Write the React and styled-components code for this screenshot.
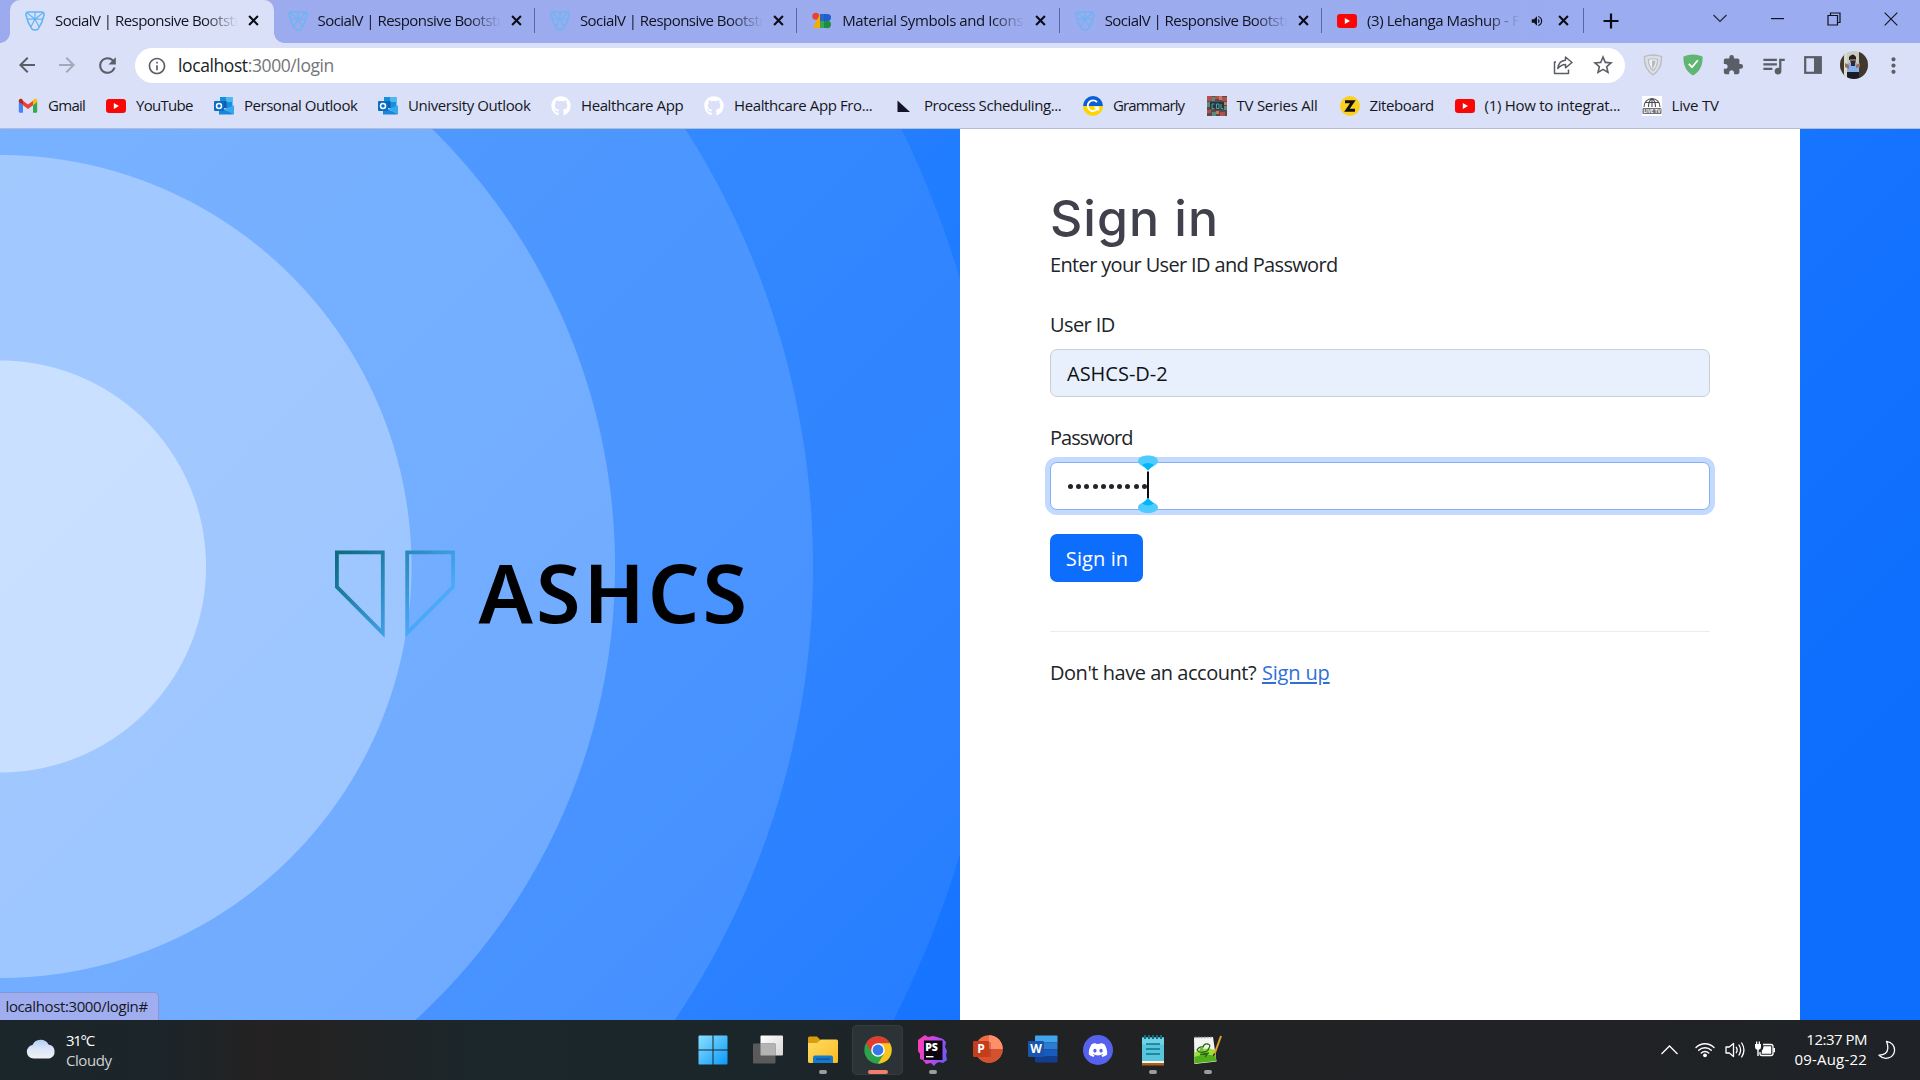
import React from 'react';
import styled, { createGlobalStyle } from 'styled-components';
import {
  MdArrowBack, MdArrowForward, MdRefresh, MdInfoOutline, MdStarOutline,
  MdExtension, MdQueueMusic, MdMoreVert, MdVolumeUp,
} from 'react-icons/md';
import { FaGithub, FaDiscord } from 'react-icons/fa';

const GlobalStyle = createGlobalStyle`
  * { box-sizing: border-box; }
  body { margin: 0; overflow: hidden; font-family: "Open Sans", "Noto Sans", sans-serif; }
  svg { display: block; flex: none; }
`;

const Screen = styled.div`
  width: 1920px;
  height: 1080px;
  display: flex;
  flex-direction: column;
  overflow: hidden;
`;

const Label = styled.span`
  white-space: nowrap;
  letter-spacing: ${(p) => p.$ls || 0}px;
`;

/* ---------- tab strip ---------- */
const TabStrip = styled.div`
  height: 43px;
  flex: none;
  display: flex;
  background: linear-gradient(to right, #9cabed, #9bacf0);
  padding-left: 10px;
  font-size: 15px;
  color: #10131f;
`;

const Tab = styled.div`
  position: relative;
  width: ${(p) => (p.$active ? 264 : 262.4)}px;
  margin-right: ${(p) => (p.$active ? -1.5 : 0)}px;
  height: 43px;
  flex: none;
  display: flex;
  align-items: center;
  padding: 0 0 2px 15px;
  gap: 10px;
  background: ${(p) => (p.$active ? '#dae0f8' : 'transparent')};
  border-radius: 10px 10px 0 0;

  &::before,
  &::after {
    content: '';
    display: ${(p) => (p.$active ? 'block' : 'none')};
    position: absolute;
    bottom: 0;
    width: 10px;
    height: 10px;
  }
  &::before {
    left: -10px;
    background: radial-gradient(circle at 0 0, transparent 9.5px, #dae0f8 10px);
  }
  &::after {
    right: -10px;
    background: radial-gradient(circle at 100% 0, transparent 9.5px, #dae0f8 10px);
  }
`;

const TabTitle = styled.div`
  width: ${(p) => p.$w}px;
  overflow: hidden;
  line-height: 22px;
  padding-bottom: 1px;
  mask-image: linear-gradient(to right, #000 calc(100% - 34px), transparent);
`;

const TabIcons = styled.div`
  display: flex;
  align-items: center;
  gap: 14px;
`;

const TabDivider = styled.div`
  width: 1px;
  height: 25px;
  margin-left: auto;
  background: #5a67a4;
`;

const NewTab = styled.div`
  width: 54px;
  padding-bottom: 1px;
  display: flex;
  align-items: center;
  justify-content: center;
`;

const WindowButtons = styled.div`
  margin-left: auto;
  height: 37px;
  display: flex;
  align-items: center;
`;

const WindowButton = styled.div`
  width: 57.2px;
  display: flex;
  justify-content: center;
`;

/* ---------- toolbar ---------- */
const Toolbar = styled.div`
  height: 45px;
  flex: none;
  display: flex;
  align-items: center;
  background: #dae0f8;
  padding: 0 0 0 7px;
  color: #5a5e66;
`;

const ToolButton = styled.div`
  width: 40px;
  height: 40px;
  padding-bottom: 1px;
  flex: none;
  display: flex;
  align-items: center;
  justify-content: center;
  color: ${(p) => (p.$dim ? '#a3a8ba' : 'inherit')};
`;

const AddressBar = styled.div`
  width: 1490px;
  height: 35px;
  margin: 0 8px;
  flex: none;
  display: flex;
  align-items: center;
  border-radius: 18px;
  background: #fff;
  padding: 0 2px 0 12px;
  font-size: 17.5px;
`;

const Url = styled.div`
  flex: 1;
  margin-left: 11px;
  padding-bottom: 2px;
  line-height: 26px;
  white-space: nowrap;
  letter-spacing: -0.4px;
  color: #73767b;
  b { font-weight: 400; color: #202124; }
`;

const Avatar = styled.div`
  width: 28px;
  height: 28px;
  margin-left: 2px;
  border-radius: 50%;
  overflow: hidden;
`;

/* ---------- bookmarks ---------- */
const Bookmarks = styled.div`
  height: 41px;
  flex: none;
  display: flex;
  align-items: center;
  background: #dae0f8;
  border-bottom: 1px solid #b4bccf;
  padding: 0 0 5px 18px;
  font-size: 15px;
  color: #15171c;
`;

const Bookmark = styled.div`
  width: ${(p) => p.$w}px;
  flex: none;
  display: flex;
  align-items: center;
  gap: 10px;
  line-height: 22px;
  span { padding-bottom: 2px; }
`;

/* ---------- page ---------- */
const Page = styled.main`
  position: relative;
  height: 891px;
  flex: none;
  display: flex;
  background: linear-gradient(135deg, #2a85ff 0%, #1f7bff 45%, #1472ff 70%, #0d6efd 90%);
`;

const Brand = styled.section`
  width: 960px;
  display: flex;
  align-items: flex-start;
  gap: 23.5px;
  padding: 420.5px 0 0 335px;
  background: radial-gradient(
    circle at 0 437.5px,
    rgba(255, 255, 255, 0.75) 205.5px, rgba(255, 255, 255, 0.565) 206.5px,
    rgba(255, 255, 255, 0.565) 411px, rgba(255, 255, 255, 0.365) 412px,
    rgba(255, 255, 255, 0.365) 614.5px, rgba(255, 255, 255, 0.185) 615.5px,
    rgba(255, 255, 255, 0.185) 812.5px, rgba(255, 255, 255, 0.07) 813.5px,
    rgba(255, 255, 255, 0.07) 1001.5px, rgba(255, 255, 255, 0) 1002.5px
  );
`;

const BrandName = styled.div`
  margin-top: -1px;
  font-family: "Noto Sans", "Open Sans", sans-serif;
  font-weight: 600;
  font-size: 81px;
  line-height: 86px;
  letter-spacing: 3px;
  color: #000;
`;

const Panel = styled.section`
  width: 840px;
  padding: 59px 90px 0;
  background: #fff;
  font-size: 20px;
  line-height: 30px;
  color: #212529;
`;

const Title = styled.h1`
  margin: 0 0 2px;
  font-family: Inter, sans-serif;
  font-weight: 500;
  font-size: 50px;
  line-height: 60px;
  letter-spacing: 1px;
  color: #41414d;
`;

const Field = styled.div`
  margin-top: ${(p) => p.$mt}px;
  display: flex;
  flex-direction: column;
  gap: 9px;
`;

const Input = styled.div`
  height: 48px;
  display: flex;
  align-items: center;
  padding: ${(p) => (p.$focus ? '0 15px' : '2px 16px 0')};
  border: 1px solid ${(p) => (p.$focus ? '#86b0f5' : '#c9cfda')};
  border-radius: 7px;
  background: ${(p) => (p.$focus ? '#fff' : '#e8f0fe')};
  box-shadow: ${(p) => (p.$focus ? '0 0 0 5px #c3d9fd' : 'none')};
  color: #101214;
`;

const Dots = styled.div`
  display: flex;
  gap: 3.2px;
  padding: 1px 0 0 2px;
`;

const Dot = styled.i`
  width: 5px;
  height: 5px;
  border-radius: 50%;
  background: #212529;
`;

const CaretSlot = styled.div`
  position: relative;
  width: 0;
  height: 46px;
  svg { position: absolute; left: -8.5px; top: -9px; }
`;

const SubmitButton = styled.button`
  display: block;
  width: 93px;
  height: 48px;
  margin: 24px 0 0;
  padding: 2px 0 0 1px;
  border: 0;
  border-radius: 7px;
  background: #0d6efd;
  font: 20px/30px "Open Sans", sans-serif;
  letter-spacing: 0.1px;
  color: #fff;
`;

const Rule = styled.div`
  height: 1px;
  margin: 49px 0 26px;
  background: #ebecee;
`;

const SignUpLink = styled.a`
  margin-left: 1px;
  color: #2f6fd6;
  letter-spacing: -0.15px;
  text-decoration: underline;
  text-decoration-thickness: 2px;
  text-underline-offset: 2px;
`;

const StatusBubble = styled.div`
  position: absolute;
  left: 0;
  bottom: 0;
  width: 159px;
  height: 28px;
  padding: 1px 0 0 5.5px;
  border: solid #8595d8;
  border-width: 1px 1px 0 0;
  border-radius: 0 5px 0 0;
  background: #a0aeef;
  font-size: 15px;
  line-height: 24px;
  color: #16181f;
`;

/* ---------- taskbar ---------- */
const Taskbar = styled.footer`
  height: 60px;
  flex: none;
  display: flex;
  background: linear-gradient(to right, #1b262b 0, #1c2529 160px, #242223 260px, #232324 330px, #1b272b 480px, #1b262b 760px, #212223 1000px, #202225 1500px, #1f2226 1920px);
  font-size: 15px;
  color: #fff;
`;

const Weather = styled.div`
  width: 685px;
  display: flex;
  align-items: flex-start;
  gap: 9px;
  padding: 18.5px 0 0 26px;
`;

const WeatherText = styled.div`
  display: flex;
  flex-direction: column;
  margin-top: -8.5px;
  line-height: 20px;
  span + span { color: #cfd2d4; }
`;

const Apps = styled.div`
  display: flex;
  padding-top: 5px;
`;

const AppCell = styled.div`
  width: 51px;
  height: 50px;
  margin: 0 2.05px;
  display: flex;
  flex-direction: column;
  align-items: center;
  justify-content: space-between;
  padding: 10px 0 1px;
  border-radius: 5px;
  background: ${(p) => (p.$active ? '#2c3336' : 'transparent')};
  box-shadow: ${(p) => (p.$active ? 'inset 0 0 0 1px #353c3f' : 'none')};
`;

const Indicator = styled.div`
  width: ${(p) => (p.$active ? 20 : 8)}px;
  height: 4px;
  border-radius: 2px;
  background: ${(p) => (p.$active ? '#f0806a' : p.$open ? '#999da0' : 'transparent')};
`;

const Tray = styled.div`
  margin-left: auto;
  display: flex;
  align-items: flex-start;
  padding: 20px 24px 0 0;
  gap: 10px;
  > :first-child { margin-right: 7px; }
`;

const Clock = styled.div`
  width: 84px;
  margin: -11px 1px 0 -2px;
  display: flex;
  flex-direction: column;
  align-items: flex-end;
  line-height: 20px;
`;

/* ---------- drawings ---------- */
const SocialV = ({ color = '#5fb5f3' }) => (
  <svg width="20" height="20" viewBox="0 0 20 20" fill="none" stroke={color} strokeWidth="1.5" strokeLinejoin="round">
    <path d="M3.200 1h13.600c1.800 0 2.600 1.300 2.200 3-.9 4.500-3.200 10-5.700 13.700-1.400 1.800-5.200 1.800-6.600 0C4.200 14 1.900 8.500 1 4 .6 2.300 1.400 1 3.200 1z" />
    <path d="M2 1.800l8 6.400 8-6.400M10 1v7.200M2.800 8.200h14.400M10 8.200 5.800 16M10 8.200 14.200 16" strokeWidth="1.200" />
  </svg>
);

const YouTube = () => (
  <svg width="20" height="20" viewBox="0 0 20 20">
    <rect y="3" width="20" height="14" rx="3.2" fill="#f90606" />
    <path d="M7.800 7v6l5.200-3z" fill="#fff" />
  </svg>
);

const MaterialLogo = () => (
  <svg width="20" height="20" viewBox="0 0 20 20">
    <circle cx="3.800" cy="5.300" r="3.500" fill="#ea4335" />
    <path d="M8 3v14H1z" fill="#f9ab00" />
    <path d="M8 3h5v14H8z" fill="#2b67c8" />
    <path d="M12.500 3a3.500 3.500 0 0 1 0 7z" fill="#1a4ea8" />
    <circle cx="15.500" cy="6.500" r="3.500" fill="#1d5fd0" />
    <circle cx="15.300" cy="13.500" r="3.700" fill="#1e8e3e" />
    <path d="M8 10h4v7H8z" fill="#34a853" />
  </svg>
);

const CloseX = () => (
  <svg width="11" height="11" viewBox="0 0 12 12" stroke="#0b0d14" strokeWidth="2.300">
    <path d="M1.200 1.200l9.600 9.600M10.800 1.200 1.200 10.800" />
  </svg>
);

const Gmail = () => (
  <svg width="20" height="20" viewBox="0 0 20 20">
    <path d="M.8 5.500V15.500q0 1.200 1.200 1.200H5V9z" fill="#4285f4" />
    <path d="M19.200 5.500V15.500q0 1.200-1.200 1.200H15V9z" fill="#34a853" />
    <path d="M5 9.200V4.800l5 3.700 5-3.700V9.200l-5 3.800z" fill="#ea4335" />
    <path d="M.8 6V5c0-1.900 1.900-2.700 3.300-1.700L5 4.300V9z" fill="#c5221f" />
    <path d="M19.200 6V5c0-1.900-1.900-2.700-3.300-1.700L15 4.300V9z" fill="#fbbc04" />
  </svg>
);

const Outlook = () => (
  <svg width="20" height="20" viewBox="0 0 20 20">
    <path d="M6 1h12.500v11H6z" fill="#1490df" />
    <path d="M12 1h6.500v5H12z" fill="#50b8f0" />
    <path d="M6 5h6.500v7H6z" fill="#0f5fab" />
    <path d="M5 9.500l8 5.500 7-5.500V17q0 1.500-1.500 1.500H5z" fill="#1a86d8" />
    <path d="M20 9.500V17q0 1-.8 1.300L10 13z" fill="#38a8ee" />
    <rect y="5" width="10" height="10" rx="1" fill="#0a6cc4" />
    <circle cx="5" cy="10" r="2.500" fill="none" stroke="#fff" strokeWidth="1.500" />
  </svg>
);

const Corner = () => (
  <svg width="20" height="20" viewBox="0 0 20 20"><path d="M3.500 4.500 16 16H3.500z" fill="#13132a" /></svg>
);

const Grammarly = () => (
  <svg width="20" height="20" viewBox="0 0 20 20">
    <path d="M0 10a10 10 0 0 1 20 0z" fill="#0a5fd6" />
    <path d="M0 10a10 10 0 0 0 20 0z" fill="#ffd500" />
    <path d="M14 6.200A5.300 5.300 0 1 0 15 11.500H11.500M15.300 11.200V14.800" fill="none" stroke="#fff" strokeWidth="1.900" />
  </svg>
);

const Series = () => (
  <svg width="20" height="20" viewBox="0 0 20 20">
    <rect width="20" height="20" fill="#5b4a4d" />
    <path d="M0 0h5v5H0zM8 0h4v3H8zM15 1h5v4h-5zM0 14h4v3H0zM13 16h5v4h-5z" fill="#b2504a" />
    <path d="M5 1h3v4H5zM0 6h3v5H0zM16 10h4v4h-4zM5 16h4v4H5z" fill="#5b8b7c" />
    <path d="M12 0h3v4h-3zM3 11h3v3H3zM9 15h3v3H9zM17 6h3v3h-3z" fill="#c97a5b" />
    <rect x="3" y="6" width="14" height="7.500" fill="#243640" />
    <path d="M5 8h2.500M5 8v4.500h2.500M9.500 8h2.500v4.500H9.500zM14 8v4.500h2" fill="none" stroke="#4fa39c" strokeWidth="1" />
  </svg>
);

const Zite = () => (
  <svg width="20" height="20" viewBox="0 0 20 20">
    <circle cx="10" cy="10" r="10" fill="#fbd021" />
    <path d="M5 5.800h7.800L7 14.200h8" fill="none" stroke="#111" strokeWidth="3" />
  </svg>
);

const LiveTv = () => (
  <svg width="20" height="20" viewBox="0 0 20 20">
    <rect width="20" height="20" fill="#fff" />
    <path d="M2 11a8 8.500 0 0 1 16 0M10 2.500V11M6.500 11c0-4 1-7 3.500-8.500 2.500 1.500 3.500 4.500 3.500 8.500M3.500 6.500h13" fill="none" stroke="#4a4d55" strokeWidth="1.100" />
    <rect x=".5" y="12" width="19" height="6" rx="1" fill="#6f727a" />
    <text x="10" y="16.800" textAnchor="middle" fontFamily="Open Sans, sans-serif" fontWeight="700" fontSize="4.800" fill="#fff">LIVE TV</text>
  </svg>
);

const ShareIcon = () => (
  <svg width="20" height="20" viewBox="0 0 20 20" fill="none" stroke="#5a5e66" strokeWidth="1.500" strokeLinejoin="round">
    <path d="M3 7H1.500v11.500h14V14.500" />
    <path d="M4.800 13.500C5.300 8.500 8 5.500 12.500 5.200V2L19 7.500l-6.500 5.300V9.500C9 9.700 7 10.800 4.800 13.500z" />
  </svg>
);

const GreyShield = () => (
  <svg width="20" height="22" viewBox="0 0 20 22">
    <path d="M1.500 2.500Q10-.5 18.500 2.500C19 11 16 17 10 21 4 17 1 11 1.500 2.500z" fill="#dcdee4" stroke="#b8bbc3" strokeWidth="1.300" />
    <path d="M5.500 5.500Q10 4 14.500 5.500C14.500 10 13 14 10 16.500 7 14 5.500 10 5.500 5.500z" fill="#eef0f5" stroke="#b8bbc3" strokeWidth="1.200" />
    <path d="M9 6.500q2-.3 3.500.2 0 5-3.500 8z" fill="#b8bbc3" />
  </svg>
);

const GreenShield = () => (
  <svg width="20" height="22" viewBox="0 0 20 22">
    <path d="M.5 2.500Q10-1.500 19.500 2.500C20 11 17 17.500 10 21.500 3 17.500 0 11 .5 2.500z" fill="#5fb572" />
    <path d="M5.800 9.800l3.200 3.400 5.800-7" fill="none" stroke="#fff" strokeWidth="1.800" />
  </svg>
);

const SidePanel = () => (
  <svg width="18" height="18" viewBox="0 0 18 18">
    <rect x="1.200" y="1.200" width="15.600" height="15.600" fill="none" stroke="#5a5e66" strokeWidth="2.200" />
    <rect x="10" y="1" width="7" height="16" fill="#5a5e66" />
  </svg>
);

const Portrait = () => (
  <svg width="28" height="28" viewBox="0 0 28 28">
    <rect width="28" height="28" fill="#c9ccbd" />
    <path d="M0 0h5v28H0zM19 0h9v28h-9z" fill="#40372f" />
    <path d="M4 0h3v28H4z" fill="#d9dccb" />
    <path d="M9 6q4-5 7 0v3H9z" fill="#20202a" />
    <path d="M10 8h6v4h-6z" fill="#86614e" />
    <path d="M7 13q6-4 11 0l1 8H7z" fill="#86aeea" />
    <path d="M5 12l4 2v4l-4-2zM20 12l-4 2v3l4-1z" fill="#9a705c" />
    <path d="M11 10h4v5h-4z" fill="#2a2a36" />
    <path d="M7 21h12v7H7z" fill="#191b26" />
  </svg>
);

const BrandMark = () => (
  <svg width="120" height="88" viewBox="0 0 120 88" fill="none" stroke="url(#brand)" strokeWidth="3.800">
    <defs>
      <linearGradient id="brand" gradientUnits="userSpaceOnUse" x1="4" y1="4" x2="86" y2="76">
        <stop offset="0" stopColor="#0c6c80" />
        <stop offset="1" stopColor="#4dabff" />
      </linearGradient>
    </defs>
    <path d="M1.900 2.400H47.800V83.200L1.900 36.900z" />
    <path d="M72.200 2.400H118.100V36.900L72.200 83.200z" />
  </svg>
);

const Caret = () => (
  <svg width="20" height="60" viewBox="0 0 20 60">
    <path d="M0 7.500C0 3.500 4.500 1.500 10 1.500S20 3.500 20 7.500C19 12 14 11.500 10 16.500 6 11.500 1 12 0 7.500z" fill="#4ecbff" />
    <path d="M4 11q6-4 12 0-3 2-6 5.500Q7 13 4 11z" fill="#00b6fb" />
    <rect x="9" y="17.500" width="2" height="27" fill="#0c0d10" />
    <path d="M0 53C0 57 4.500 59 10 59S20 57 20 53C19 48.500 14 49.500 10 44.500 6 49.500 1 48.500 0 53z" fill="#4ecbff" />
    <path d="M4 49.500q6 4 12 0-3-2-6-5.500-3 3.500-6 5.500z" fill="#00b6fb" />
  </svg>
);

const Cloud = () => (
  <svg width="31" height="20" viewBox="0 0 30 20">
    <defs>
      <linearGradient id="cloud" x1="0" y1="0" x2="0" y2="1">
        <stop offset="0" stopColor="#b3cdf6" />
        <stop offset=".5" stopColor="#dce6f7" />
        <stop offset="1" stopColor="#f0f1f4" />
      </linearGradient>
    </defs>
    <path d="M7 19.500a6.800 6.800 0 0 1-1-13.500A9 9 0 0 1 22 5.500a7.200 7.200 0 0 1 1 14z" fill="url(#cloud)" />
  </svg>
);

const Windows = () => (
  <svg width="30" height="30" viewBox="0 0 30 30">
    <defs>
      <linearGradient id="win" x1="0" y1="0" x2="1" y2="1">
        <stop offset="0" stopColor="#8be0ff" />
        <stop offset="1" stopColor="#0a99f7" />
      </linearGradient>
    </defs>
    <path d="M.5 1.500Q.5.500 1.500.500h13v14H.5zM15.500.500h13q1 0 1 1v13h-14zM.5 15.500h14v14h-13q-1 0-1-1zM15.500 15.500h14v13q0 1-1 1h-13z" fill="url(#win)" />
  </svg>
);

const TaskView = () => (
  <svg width="30" height="30" viewBox="0 0 30 30">
    <defs>
      <linearGradient id="tv" x1="0" y1="0" x2="1" y2="1">
        <stop offset="0" stopColor="#fff" />
        <stop offset="1" stopColor="#d6d6d6" />
      </linearGradient>
    </defs>
    <rect x="7.500" y=".5" width="22.500" height="20" rx="1" fill="url(#tv)" />
    <rect x="0" y="8.500" width="22.500" height="20" rx="1" fill="#5a5a5a" />
    <rect x="7.500" y="8.500" width="15" height="12" fill="#b4b4b4" />
  </svg>
);

const Folder = () => (
  <svg width="30" height="30" viewBox="0 0 30 30">
    <defs>
      <linearGradient id="fold" x1="0" y1="0" x2="1" y2="1">
        <stop offset="0" stopColor="#ffdc68" />
        <stop offset="1" stopColor="#fbbb1f" />
      </linearGradient>
    </defs>
    <path d="M0 3q0-1.500 1.500-1.500H9L12.500 5V9H0z" fill="#dc9d0c" />
    <path d="M0 8h9l4-3.500h15.500q1.500 0 1.500 1.500v20.500q0 1.500-1.500 1.500h-27Q0 28 0 26.500z" fill="url(#fold)" />
    <path d="M5 28v-5.500Q5 20.500 7 20.500h16q2 0 2 2V28z" fill="#1679ca" />
    <rect x="8" y="23.500" width="14" height="1.200" fill="#0a4f93" />
  </svg>
);

const Chrome = () => (
  <svg width="30" height="30" viewBox="0 0 30 30">
    <circle cx="15" cy="15" r="13.700" fill="#2ba24c" />
    <path d="M3.100 8.200A13.700 13.700 0 0 1 26.900 8.200H15L9 18z" fill="#e33b2e" />
    <path d="M26.900 8.200A13.700 13.700 0 0 1 15 28.700L21 18.400 15 8.200z" fill="#fcc31e" />
    <circle cx="15" cy="15" r="6.800" fill="#fff" />
    <circle cx="15" cy="15" r="5.400" fill="#3578ea" />
  </svg>
);

const PhpStorm = () => (
  <svg width="30" height="31" viewBox="0 0 30 31">
    <defs>
      <linearGradient id="ps" x1="0" y1=".2" x2="1" y2=".5">
        <stop offset="0" stopColor="#ff3fae" />
        <stop offset=".5" stopColor="#c846ea" />
        <stop offset="1" stopColor="#7458f4" />
      </linearGradient>
    </defs>
    <path d="M0 5l7-5 3 2 5-1 4 1 6 2 3 3-1 5 2 4-1 4 1 5-4 3-4-1-3 1.500-2 2.500-3-3-5 1-3-4-3-1 0-5-2-3 0-4z" fill="url(#ps)" />
    <rect x="6" y="5.500" width="18.500" height="19.500" fill="#0c0510" />
    <text x="7.200" y="15.800" fontFamily="Open Sans, sans-serif" fontWeight="800" fontSize="10.500" fill="#fff">PS</text>
    <rect x="8" y="21" width="7.500" height="1.400" fill="#fff" />
  </svg>
);

const PowerPoint = () => (
  <svg width="30" height="30" viewBox="0 0 30 30">
    <circle cx="16" cy="14" r="13.700" fill="#ed6c47" />
    <path d="M16 .3A13.700 13.700 0 0 1 29.700 14H16z" fill="#ff8f6b" />
    <path d="M2.300 14H29.700A13.700 13.700 0 0 1 2.300 14z" fill="#d35230" />
    <path d="M16 7h2v15h-2z" fill="#9c3a20" opacity=".4" />
    <rect x="0" y="6" width="16" height="16" rx="1.200" fill="#c43e1c" />
    <text x="8" y="18.200" textAnchor="middle" fontFamily="Open Sans, sans-serif" fontWeight="700" fontSize="12" fill="#fff">P</text>
  </svg>
);

const Word = () => (
  <svg width="30" height="30" viewBox="0 0 30 30">
    <path d="M7 1.500Q7 .5 8 .5h20.500q1 0 1 1v6H7z" fill="#41a5ee" />
    <path d="M7 7.500h22.500v7H7z" fill="#2b7cd3" />
    <path d="M7 14.500h22.500v7H7z" fill="#185abd" />
    <path d="M7 21.500h22.500v5q0 1-1 1H8q-1 0-1-1z" fill="#103f91" />
    <rect x="0" y="6" width="16" height="16" rx="1.200" fill="#1854b0" />
    <text x="8" y="18.200" textAnchor="middle" fontFamily="Open Sans, sans-serif" fontWeight="700" fontSize="12" fill="#fff">W</text>
  </svg>
);

const DiscordBadge = styled.div`
  width: 30px;
  height: 30px;
  border-radius: 50%;
  display: flex;
  align-items: center;
  justify-content: center;
  background: #5662ee;
  color: #fff;
`;

const Notepad = () => (
  <svg width="24" height="32" viewBox="0 0 24 32">
    <path d="M1 26h22v4.500H1z" fill="#a8601e" />
    <path d="M1 25h22v3H1z" fill="#f5f2e8" />
    <path d="M1 2.500h22V26H1z" fill="#57c6dc" />
    <path d="M1 2.500h22v7H1z" fill="#70d2e5" />
    <path d="M4 0v4M8 0v4M12 0v4M16 0v4M20 0v4" stroke="#0f6d84" strokeWidth="2" />
    <path d="M5 9h14M5 14h14M5 19h14" stroke="#0e7490" strokeWidth="1.700" />
  </svg>
);

const NotepadPlus = () => (
  <svg width="30" height="30" viewBox="0 0 30 30">
    <path d="M1 2.500l19-.5 3.500 24.500L1.500 29z" fill="#f4f5f2" />
    <path d="M1.200 18q10-7 20.500-3l1.500 11-21.500 2.200z" fill="#9be03f" />
    <path d="M1.400 22q10-4 21-1l.8 5-21.500 2.200z" fill="#53ad1d" />
    <path d="M4 15q2-4 6-3 1-4 5-3 3 1 1 4-1 4-6 4-4 1-6-2zM7 19.500l9-1.500M12 22l3-4" fill="none" stroke="#2b6a18" strokeWidth="1.300" />
    <circle cx="8.500" cy="14.500" r="2" fill="#6cc43a" />
    <path d="M2 2.500h18" stroke="#a3a8ae" strokeWidth="1.600" strokeDasharray="1.500 1.500" />
    <path d="M28 1l-6.500 18" stroke="#e2a02a" strokeWidth="2" />
    <path d="M21.500 18.500l-1 2.500" stroke="#3a2a14" strokeWidth="1.500" />
  </svg>
);

const Chevron = () => (
  <svg width="17" height="20" viewBox="0 0 17 20" fill="none" stroke="#fff" strokeWidth="1.300"><path d="M.5 14l8-8 8 8" /></svg>
);

const Wifi = () => (
  <svg width="20" height="20" viewBox="0 0 20 20" fill="none" stroke="#fff" strokeWidth="1.400" strokeLinecap="round">
    <path d="M1 7.500a12.700 12.700 0 0 1 18 0M3.700 10.300a9 9 0 0 1 12.600 0M6.300 13a5.200 5.200 0 0 1 7.400 0" />
    <circle cx="10" cy="15.300" r="1.900" fill="#fff" stroke="none" />
  </svg>
);

const Speaker = () => (
  <svg width="20" height="20" viewBox="0 0 20 20" fill="none" stroke="#fff" strokeWidth="1.300" strokeLinejoin="round" strokeLinecap="round">
    <path d="M1 7h3.300L8.500 3.500v13L4.300 13H1z" />
    <path d="M11.300 7.300q1.700 2.700 0 5.400M14 5q3.200 5 0 10M16.700 3q4.500 7 0 14" />
  </svg>
);

const Battery = () => (
  <svg width="20" height="20" viewBox="0 0 20 20">
    <path d="M8 4.500h8q2 0 2 2v7q0 2-2 2H7q-2 0-2-2V12" fill="none" stroke="#fff" strokeWidth="1.300" />
    <path d="M8.500 6.300h7.700v7.400H6.800V10.500q1.700-1 1.700-4.200z" fill="#fff" />
    <path d="M18.300 8H20v4.200h-1.700z" fill="#fff" />
    <path d="M0 4h1V1.500h1.300V4h1.400V1.500H5V4h1v3Q6 9.500 3.700 9.700V16H2.300V9.700Q0 9.500 0 7z" fill="#fff" />
  </svg>
);

const Moon = () => (
  <svg width="18" height="20" viewBox="0 0 18 20" fill="none" stroke="#fff" strokeWidth="1.300" strokeLinejoin="round">
    <path d="M8.500 1.300C14 2 17 6 16.500 11 15.500 18 7 21 1 15.200 6 15 9.500 12.500 9.800 8.500 10 5.500 9.300 3.500 8.500 1.300z" />
  </svg>
);

/* ---------- data ---------- */
const social = 'SocialV | Responsive Bootstr';
const tabs = [
  { icon: <SocialV />, title: social, ls: -0.54, active: true },
  { icon: <SocialV color="#6fb4f4" />, title: social, ls: -0.54 },
  { icon: <SocialV color="#6fb4f4" />, title: social, ls: -0.54, line: true },
  { icon: <MaterialLogo />, title: 'Material Symbols and Icons', ls: -0.42, line: true },
  { icon: <SocialV color="#6fb4f4" />, title: social, ls: -0.54, line: true },
  { icon: <YouTube />, title: '(3) Lehanga Mashup - F', ls: -0.43, line: true, audio: true },
];

const GitHubMark = () => <FaGithub size={20} color="#fff" />;

const bookmarks = [
  { icon: <Gmail />, text: 'Gmail', w: 88, ls: -0.7 },
  { icon: <YouTube />, text: 'YouTube', w: 108, ls: -0.7 },
  { icon: <Outlook />, text: 'Personal Outlook', w: 164, ls: -0.47 },
  { icon: <Outlook />, text: 'University Outlook', w: 173, ls: -0.4 },
  { icon: <GitHubMark />, text: 'Healthcare App', w: 153, ls: -0.41 },
  { icon: <GitHubMark />, text: 'Healthcare App Fro...', w: 190, ls: -0.39 },
  { icon: <Corner />, text: 'Process Scheduling...', w: 189, ls: -0.42 },
  { icon: <Grammarly />, text: 'Grammarly', w: 123.5, ls: -0.85 },
  { icon: <Series />, text: 'TV Series All', w: 133, ls: -0.24 },
  { icon: <Zite />, text: 'Ziteboard', w: 115, ls: -0.4 },
  { icon: <YouTube />, text: '(1) How to integrat...', w: 187, ls: -0.27 },
  { icon: <LiveTv />, text: 'Live TV', w: 90, ls: -0.2 },
];

const apps = [
  { icon: <Windows /> },
  { icon: <TaskView /> },
  { icon: <Folder />, open: true },
  { icon: <Chrome />, active: true },
  { icon: <PhpStorm />, open: true },
  { icon: <PowerPoint /> },
  { icon: <Word /> },
  { icon: <DiscordBadge><FaDiscord size={20} /></DiscordBadge> },
  { icon: <Notepad />, open: true },
  { icon: <NotepadPlus />, open: true },
];

export default function App() {
  return (
    <Screen>
      <GlobalStyle />
      <TabStrip>
        {tabs.map((t, i) => (
          <Tab key={i} $active={t.active}>
            {t.icon}
            <TabTitle $w={t.audio ? 153 : 183}><Label $ls={t.ls}>{t.title}</Label></TabTitle>
            <TabIcons>
              {t.audio && <MdVolumeUp size={14} color="#10131f" />}
              <CloseX />
            </TabIcons>
            {(t.line || i === 1) && <TabDivider />}
          </Tab>
        ))}
        <NewTab>
          <svg width="16" height="16" viewBox="0 0 16 16" stroke="#0b0d14" strokeWidth="2.200"><path d="M8 .5v15M.5 8h15" /></svg>
        </NewTab>
        <WindowButtons>
          <WindowButton><svg width="14" height="9" viewBox="0 0 14 9" fill="none" stroke="#20242f" strokeWidth="1.100"><path d="M.5 1 7 7.500 13.500 1" /></svg></WindowButton>
          <WindowButton><svg width="13" height="2" viewBox="0 0 13 2"><rect y="0" width="13" height="1.200" fill="#10131f" /></svg></WindowButton>
          <WindowButton><svg width="14" height="14" viewBox="0 0 14 14" fill="none" stroke="#10131f" strokeWidth="1.200"><path d="M1 3.500h9.500V13H1zM3.500 3.500V1H13v9.500h-2.500" /></svg></WindowButton>
          <WindowButton><svg width="14" height="14" viewBox="0 0 14 14" stroke="#10131f" strokeWidth="1.100"><path d="M.7.7l12.600 12.600M13.300.7.7 13.300" /></svg></WindowButton>
        </WindowButtons>
      </TabStrip>

      <Toolbar>
        <ToolButton><MdArrowBack size={24} /></ToolButton>
        <ToolButton $dim><MdArrowForward size={24} /></ToolButton>
        <ToolButton><MdRefresh size={25} /></ToolButton>
        <AddressBar>
          <MdInfoOutline size={20} />
          <Url><b>localhost</b>:3000/login</Url>
          <ToolButton><ShareIcon /></ToolButton>
          <ToolButton><MdStarOutline size={24} /></ToolButton>
        </AddressBar>
        <ToolButton><GreyShield /></ToolButton>
        <ToolButton><GreenShield /></ToolButton>
        <ToolButton><MdExtension size={22} /></ToolButton>
        <ToolButton><MdQueueMusic size={27} /></ToolButton>
        <ToolButton><SidePanel /></ToolButton>
        <ToolButton><Avatar><Portrait /></Avatar></ToolButton>
        <ToolButton><MdMoreVert size={25} /></ToolButton>
      </Toolbar>

      <Bookmarks>
        {bookmarks.map((b, i) => (
          <Bookmark key={i} $w={b.w}>
            {b.icon}
            <Label $ls={b.ls}>{b.text}</Label>
          </Bookmark>
        ))}
      </Bookmarks>

      <Page>
        <Brand>
          <BrandMark />
          <BrandName>ASHCS</BrandName>
        </Brand>
        <Panel>
          <Title>Sign in</Title>
          <Label $ls={-0.65}>Enter your User ID and Password</Label>
          <Field $mt={30}>
            <Label $ls={-0.6}>User ID</Label>
            <Input><Label>ASHCS-D-2</Label></Input>
          </Field>
          <Field $mt={26}>
            <Label $ls={-0.95}>Password</Label>
            <Input $focus>
              <Dots>{Array.from({ length: 10 }, (_, i) => <Dot key={i} />)}</Dots>
              <CaretSlot><Caret /></CaretSlot>
            </Input>
          </Field>
          <SubmitButton>Sign in</SubmitButton>
          <Rule />
          <Label $ls={-0.47}>Don't have an account? <SignUpLink>Sign up</SignUpLink></Label>
        </Panel>
        <StatusBubble><Label $ls={-0.38}>localhost:3000/login#</Label></StatusBubble>
      </Page>

      <Taskbar>
        <Weather>
          <Cloud />
          <WeatherText>
            <Label $ls={-1.300}>31°C</Label>
            <Label $ls={-0.43}>Cloudy</Label>
          </WeatherText>
        </Weather>
        <Apps>
          {apps.map((a, i) => (
            <AppCell key={i} $active={a.active}>
              {a.icon}
              <Indicator $active={a.active} $open={a.open} />
            </AppCell>
          ))}
        </Apps>
        <Tray>
          <Chevron />
          <Wifi />
          <Speaker />
          <Battery />
          <Clock>
            <Label $ls={-0.5}>12:37 PM</Label>
            <Label $ls={0.2}>09-Aug-22</Label>
          </Clock>
          <Moon />
        </Tray>
      </Taskbar>
    </Screen>
  );
}
